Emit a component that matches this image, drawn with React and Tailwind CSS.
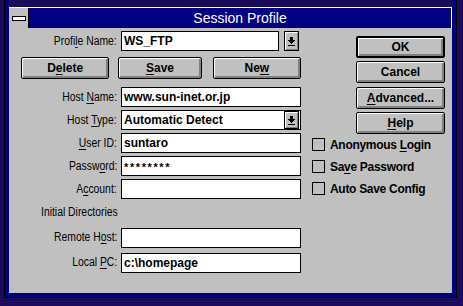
import React from "react";

const SANS = "font-['Liberation_Sans',Arial,sans-serif]";
const BOLD = "font-['Liberation_Sans',Arial,sans-serif] font-bold";

function U({ children }) {
  return <span className="underline decoration-1 underline-offset-[2px]">{children}</span>;
}

function Label({ children }) {
  return (
    <div className={`w-[112px] pr-[4px] text-right text-[12.5px] leading-none text-black ${SANS}`}>
      <span className="inline-block whitespace-nowrap scale-x-[0.83] origin-right">{children}</span>
    </div>
  );
}

function Arrow() {
  return (
    <svg width="7" height="9" viewBox="0 0 7 9" shapeRendering="crispEdges">
      <rect x="2" y="0" width="3" height="3" fill="#000" />
      <path d="M0 3h7l-3.5 4z" fill="#000" />
      <rect x="0" y="8" width="7" height="1" fill="#000" />
    </svg>
  );
}

function DropBtn({ extra }) {
  return (
    <div
      className={`w-[15px] border border-black bg-[#c0c0c0] shadow-[inset_1px_1px_0_#fff,inset_-1px_-1px_0_#808080] flex items-center justify-center ${extra}`}
    >
      <Arrow />
    </div>
  );
}

function Field({ children, w }) {
  return (
    <div className={`${w} h-[20px] border border-black bg-white pl-[2px] flex items-center text-[12px] leading-none text-black ${BOLD}`}>
      {children}
    </div>
  );
}

function Btn({ w, children, def }) {
  return (
    <div
      className={`${w} ${def ? "border-2" : "border"} h-[22px] rounded-[2px] border-black bg-[#c0c0c0] shadow-[inset_1px_1px_0_#fff,inset_-2px_-2px_0_#808080] flex items-center justify-center text-[12px] leading-none text-black ${BOLD}`}
    >
      {children}
    </div>
  );
}

function Check({ children }) {
  return (
    <div className="flex items-center h-[13px]">
      <div className="w-[13px] h-[13px] border border-black bg-[#c0c0c0]" />
      <div className={`ml-[5px] text-[12px] leading-none tracking-[-0.3px] text-black ${BOLD}`}>{children}</div>
    </div>
  );
}

function Row({ label, children, mt }) {
  return (
    <div className={`flex items-center ${mt}`}>
      <Label>{label}</Label>
      {children}
    </div>
  );
}

export default function App() {
  return (
    <div className="w-[463px] h-[306px] bg-[#1a0c5a] pl-[4px] overflow-hidden">
      <div className="w-[453px] h-[298px] border-l border-r border-b border-black bg-[#000080] px-[4px] pb-[4px] flex flex-col">
        <div className="h-[7px] bg-[#1a0c5a]" />
        {/* title bar */}
        <div className="h-[21px] flex border-t border-white">
          <div className="w-[20px] h-[20px] bg-[#c0c0c0] border-r border-black flex items-center justify-center">
            <div className="w-[14px] h-[5px] bg-white border border-black" />
          </div>
          <div className={`flex-1 bg-[#000080] border-r border-white flex items-center justify-center text-white text-[14px] leading-none ${SANS}`}>
            Session Profile
          </div>
        </div>
        {/* client */}
        <div className="h-[265px] bg-[#c0c0c0] flex">
          {/* left column */}
          <div className="w-[292px] flex flex-col pt-[3px]">
            <Row label={<>Profi<U>l</U>e Name:</>}>
              <Field w="w-[158px]">WS_FTP</Field>
              <DropBtn extra="ml-[5px] h-[20px]" />
            </Row>
            <div className="flex mt-[6px] pl-[12px]">
              <Btn w="w-[89px]">
                D<U>e</U>lete
              </Btn>
              <Btn w="w-[84px] ml-[9px]">
                <U>S</U>ave
              </Btn>
              <Btn w="w-[89px] ml-[11px]">
                Ne<U>w</U>
              </Btn>
            </div>
            <Row label={<>Host <U>N</U>ame:</>} mt="mt-[8px]">
              <Field w="w-[180px]">www.sun-inet.or.jp</Field>
            </Row>
            <Row label={<>Host <U>T</U>ype:</>} mt="mt-[3px]">
              <div className={`w-[180px] h-[20px] border border-black bg-white pl-[2px] flex items-center text-[12px] leading-none text-black ${BOLD}`}>
                <span className="flex-1">Automatic Detect</span>
                <DropBtn extra="h-[18px] mr-[1px]" />
              </div>
            </Row>
            <Row label={<><U>U</U>ser ID:</>} mt="mt-[3px]">
              <Field w="w-[180px]">suntaro</Field>
            </Row>
            <Row label={<>Passw<U>o</U>rd:</>} mt="mt-[3px]">
              <Field w="w-[180px]">
                <span className="text-[11px] tracking-[1.6px] pt-[3px]">********</span>
              </Field>
            </Row>
            <Row label={<>A<U>c</U>count:</>} mt="mt-[3px]">
              <Field w="w-[180px]"></Field>
            </Row>
            <div className={`mt-[7px] pl-[32px] text-[12.5px] leading-none text-black ${SANS}`}>
              <span className="inline-block whitespace-nowrap scale-x-[0.83] origin-left">Initial Directories</span>
            </div>
            <Row label={<>Remote H<U>o</U>st:</>} mt="mt-[9px]">
              <Field w="w-[180px]"></Field>
            </Row>
            <Row label={<>Local <U>P</U>C:</>} mt="mt-[5px]">
              <Field w="w-[180px]">c:\homepage</Field>
            </Row>
          </div>
          {/* right column */}
          <div className="ml-[11px] w-[139px] flex flex-col">
            <div className="pl-[44px] flex flex-col pt-[8px]">
              <Btn w="w-[89px]" def>
                OK
              </Btn>
              <Btn w="w-[89px] mt-[3px]">Cancel</Btn>
              <Btn w="w-[89px] mt-[4px]">
                <U>A</U>dvanced...
              </Btn>
              <Btn w="w-[89px] mt-[3px]">
                <U>H</U>elp
              </Btn>
            </div>
            <div className="flex flex-col mt-[4px] gap-[9px]">
              <Check>
                Anonymous <U>L</U>ogin
              </Check>
              <Check>
                Sa<U>v</U>e Password
              </Check>
              <Check>Auto Save Config</Check>
            </div>
          </div>
        </div>
      </div>
    </div>
  );
}
